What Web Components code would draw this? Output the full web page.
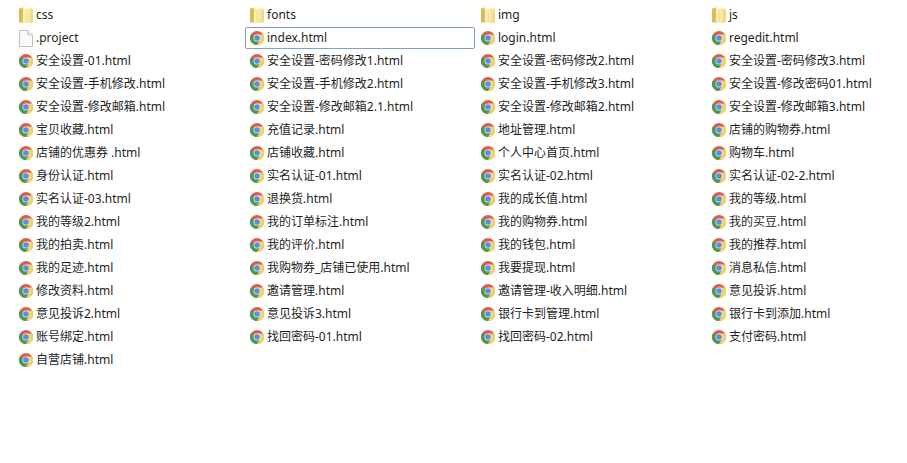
<!DOCTYPE html>
<html lang="zh">
<head>
<meta charset="utf-8">
<title>files</title>
<style>
  html, body { margin: 0; background: #fff; }
</style>
</head>
<body>
<file-list></file-list>
<script>
const icons = {
  folder: `<svg width="14" height="16" viewBox="0 0 14 16">
    <defs>
      <linearGradient id="f" x1="0" y1="0" x2="1" y2="0">
        <stop offset="0" stop-color="#ecd98c"/><stop offset=".45" stop-color="#fcf3c0"/><stop offset="1" stop-color="#efd67e"/>
      </linearGradient>
    </defs>
    <path d="M0 2 L4 0 L5 1.5 L12 1.5 Q14 1.5 14 3.5 V14 Q14 16 12 16 H2 Q0 16 0 14Z" fill="url(#f)"/>
    <path d="M3.5 .5 Q4.5 8 3.5 15.6 L1.5 15.5 Q0 15 0 13.5 V2Z" fill="#d9ba55"/>
    <path d="M7 3.5 V15" stroke="#e8cf74" stroke-width="1" opacity=".7"/>
  </svg>`,
  file: `<svg width="14" height="17" viewBox="0 0 14 17">
    <path d="M.5 .5 H9 L13.5 5 V16.5 H.5Z" fill="#fbfbfb" stroke="#bcc0c4"/>
    <path d="M9 .5 V5 H13.5" fill="#eceef0" stroke="#bcc0c4"/>
  </svg>`,
  chrome: `<svg width="14" height="14" viewBox="0 0 16 16">
    <circle cx="8" cy="8" r="8" fill="#d8604e"/>
    <path d="M8 8 L1.07 4 A8 8 0 0 0 8 16 L11.5 10Z" fill="#4a9a55"/>
    <path d="M8 4 L14.93 4 A8 8 0 0 1 8 16 L11.46 10Z" fill="#f4d264"/>
    <circle cx="8" cy="8" r="4" fill="#e6eefa"/>
    <circle cx="8" cy="8" r="3.2" fill="#5a8fe0"/>
  </svg>`
};

class FileItem extends HTMLElement {
  constructor() {
    super();
    this.attachShadow({mode: 'open'});
  }
  connectedCallback() {
    const type = this.getAttribute('type') || 'chrome';
    this.shadowRoot.innerHTML = `
    <style>
      :host {
        display: flex;
        align-items: center;
        box-sizing: border-box;
        height: 22px;
        padding-left: 3px;
        border: 1px solid transparent;
        border-radius: 2px;
        overflow: hidden;
        white-space: nowrap;
      }
      :host([selected]) {
        border-color: #7fa1c6;
      }
      .icon {
        display: flex;
        align-items: center;
        justify-content: center;
        width: 16px;
        height: 18px;
        margin-right: 2px;
        flex: none;
      }
    </style>
    <span class="icon">${icons[type]}</span>
    <slot></slot>`;
  }
}
customElements.define('file-item', FileItem);

const files = [
  ['css','folder'],['fonts','folder'],['img','folder'],['js','folder'],
  ['.project','file'],['index.html','chrome',true],['login.html'],['regedit.html'],
  ['安全设置-01.html'],['安全设置-密码修改1.html'],['安全设置-密码修改2.html'],['安全设置-密码修改3.html'],
  ['安全设置-手机修改.html'],['安全设置-手机修改2.html'],['安全设置-手机修改3.html'],['安全设置-修改密码01.html'],
  ['安全设置-修改邮箱.html'],['安全设置-修改邮箱2.1.html'],['安全设置-修改邮箱2.html'],['安全设置-修改邮箱3.html'],
  ['宝贝收藏.html'],['充值记录.html'],['地址管理.html'],['店铺的购物券.html'],
  ['店铺的优惠券 .html'],['店铺收藏.html'],['个人中心首页.html'],['购物车.html'],
  ['身份认证.html'],['实名认证-01.html'],['实名认证-02.html'],['实名认证-02-2.html'],
  ['实名认证-03.html'],['退换货.html'],['我的成长值.html'],['我的等级.html'],
  ['我的等级2.html'],['我的订单标注.html'],['我的购物券.html'],['我的买豆.html'],
  ['我的拍卖.html'],['我的评价.html'],['我的钱包.html'],['我的推荐.html'],
  ['我的足迹.html'],['我购物券_店铺已使用.html'],['我要提现.html'],['消息私信.html'],
  ['修改资料.html'],['邀请管理.html'],['邀请管理-收入明细.html'],['意见投诉.html'],
  ['意见投诉2.html'],['意见投诉3.html'],['银行卡到管理.html'],['银行卡到添加.html'],
  ['账号绑定.html'],['找回密码-01.html'],['找回密码-02.html'],['支付密码.html'],
  ['自营店铺.html']
];

class FileList extends HTMLElement {
  constructor() {
    super();
    this.attachShadow({mode: 'open'});
  }
  connectedCallback() {
    this.shadowRoot.innerHTML = `
    <style>
      :host {
        display: grid;
        grid-template-columns: repeat(4, 230px);
        grid-auto-rows: 22px;
        column-gap: 1px;
        row-gap: 1px;
        padding: 4px 0 0 14px;
        font: 12px/22px "Noto Sans", "Noto Sans CJK SC", sans-serif;
        color: #1e1e1e;
      }
    </style>
    ${files.map(f => `<file-item type="${f[1] || 'chrome'}"${f[2] ? ' selected' : ''}>${f[0]}</file-item>`).join('')}`;
  }
}
customElements.define('file-list', FileList);
</script>
</body>
</html>
